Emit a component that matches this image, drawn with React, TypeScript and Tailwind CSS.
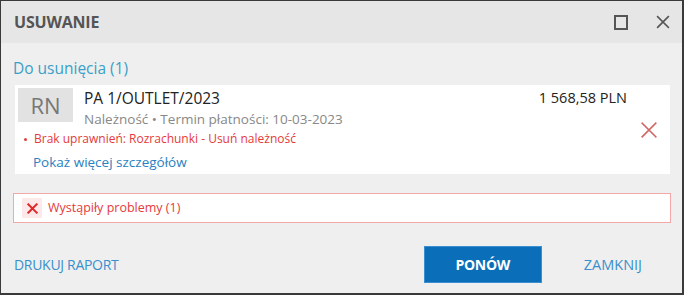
import React from "react";

function XIcon({ className, stroke = 2 }: { className?: string; stroke?: number }) {
  return (
    <svg viewBox="0 0 16 16" className={className} fill="none" stroke="currentColor" strokeWidth={stroke} strokeLinecap="square">
      <path d="M2 2 L14 14 M14 2 L2 14" />
    </svg>
  );
}

export default function App() {
  return (
    <div
      className="w-[684px] h-[295px] bg-[#efefef] border-l border-t border-r-2 border-b-2 border-[#3a3a3a] flex flex-col overflow-hidden"
      style={{ fontFamily: '"Open Sans", "Noto Sans", sans-serif' }}
    >
      <div className="h-[42px] bg-[#e6e6e6] flex items-center pl-[13px] pr-[12px] shrink-0">
        <div className="text-[16px] font-bold text-[#555] tracking-[-0.2px]">USUWANIE</div>
        <div className="ml-auto flex items-center gap-[28px]">
          <div className="w-[14px] h-[15px] border-2 border-[#555]" />
          <XIcon className="w-[14px] h-[14px] text-[#555]" stroke={2} />
        </div>
      </div>
      <div className="flex-1 flex flex-col pl-[12px] pr-[11px]">
        <div className="mt-[14px] text-[15.5px] text-[#3aa0c8] leading-[22px]">Do usunięcia (1)</div>
        <div className="mt-[6px] ml-[2px] mr-[1px] h-[89px] bg-white flex">
          <div className="flex-1 flex flex-col pt-[3px] pl-[3px]">
            <div className="flex">
              <div className="w-[55px] h-[34px] bg-[#e2e2e2] flex items-center justify-center text-[22px] text-[#777] shrink-0">
                RN
              </div>
              <div className="flex-1 flex flex-col pl-[11px]">
                <div className="flex items-start justify-between">
                  <div className="text-[15.5px] text-[#222] leading-[20px]">PA 1/OUTLET/2023</div>
                  <div className="text-[14.5px] text-[#222] leading-[20px]">1 568,58 PLN</div>
                </div>
                <div className="text-[13.5px] text-[#888] leading-[20px] mt-[1px]">Należność • Termin płatności: 10-03-2023</div>
              </div>
            </div>
            <div className="mt-[2px] flex items-center text-[12px] leading-[16px] text-[#e53a3a]">
              <span className="w-[3px] h-[3px] rounded-full bg-[#e53a3a] ml-[6px] mr-[7px]" />
              Brak uprawnień: Rozrachunki - Usuń należność
            </div>
            <div className="mt-[5px] ml-[15px] text-[13.5px] leading-[20px] text-[#2a7fc1]">Pokaż więcej szczegółów</div>
          </div>
          <div className="w-[43px] flex items-center justify-center shrink-0">
            <XIcon className="w-[18px] h-[18px] text-[#d06868]" stroke={1.5} />
          </div>
        </div>
        <div className="h-[30px] mt-[19px] bg-white border border-[#f2a8a8] flex items-center">
          <div className="w-[20px] h-[20px] ml-[8px] bg-[#fde9e9] flex items-center justify-center">
            <XIcon className="w-[11px] h-[11px] text-[#e02a2a]" stroke={3} />
          </div>
          <div className="ml-[6px] text-[12.5px] text-[#e53a3a]">Wystąpiły problemy (1)</div>
        </div>
        <div className="mt-[23px] flex items-center">
          <button className="ml-[1px] text-[14px] text-[#3a8fcc] tracking-[-0.3px]">DRUKUJ RAPORT</button>
          <button className="ml-auto w-[118px] h-[37px] bg-[#0a6fb8] border border-[#3b8fd0] text-white text-[14px] font-bold tracking-[-0.3px]">
            PONÓW
          </button>
          <button className="ml-[42px] mr-[29px] text-[14.5px] text-[#3a8fcc]">ZAMKNIJ</button>
        </div>
      </div>
    </div>
  );
}
